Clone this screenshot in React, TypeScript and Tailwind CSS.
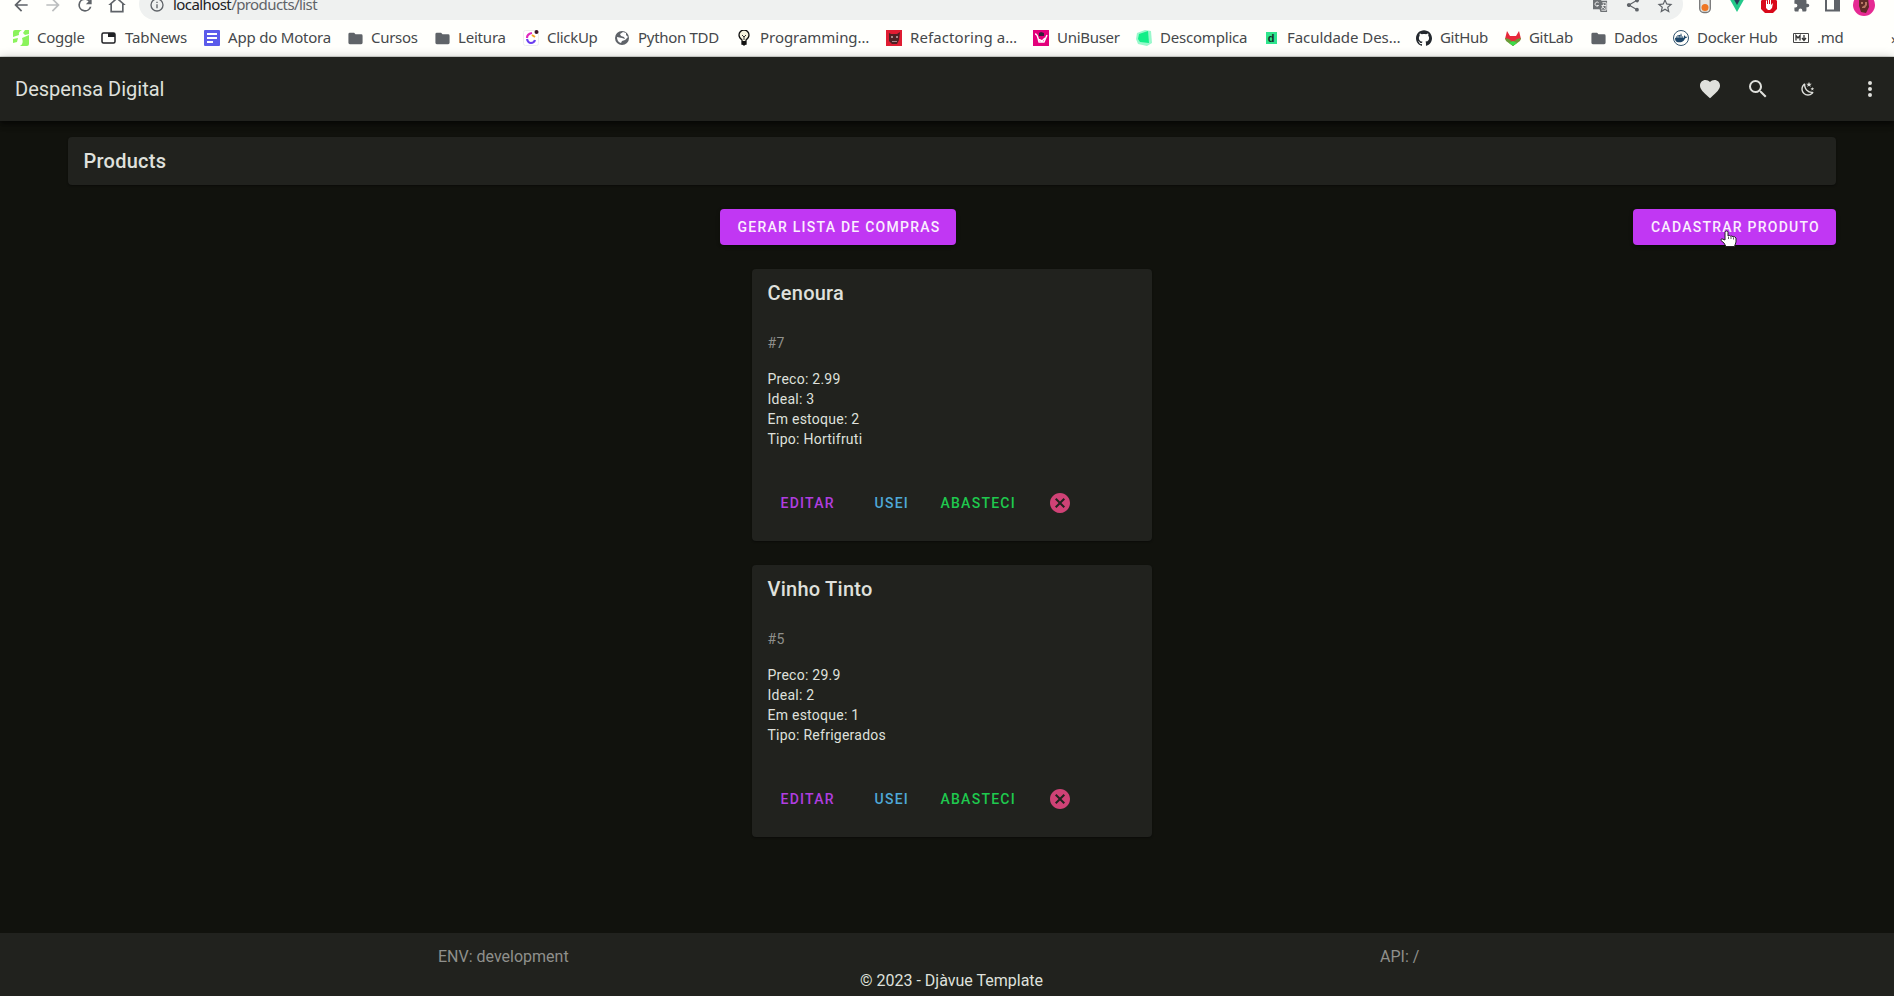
import React from "react";
import { SiGithub, SiDocker } from "react-icons/si";

type IconProps = { d: string; className?: string };
const Icon = ({ d, className = "size-6" }: IconProps) => (
  <svg viewBox="0 0 24 24" className={`shrink-0 ${className}`} fill="currentColor">
    <path d={d} />
  </svg>
);

const paths = {
  back: "M20 11H7.83l5.59-5.59L12 4l-8 8 8 8 1.41-1.41L7.83 13H20v-2z",
  forward: "M12 4l-1.41 1.41L16.17 11H4v2h12.17l-5.58 5.59L12 20l8-8z",
  reload:
    "M17.65 6.35A7.96 7.96 0 0 0 12 4a8 8 0 1 0 7.73 10h-2.08A6 6 0 1 1 12 6c1.66 0 3.14.69 4.22 1.78L13 11h7V4l-2.35 2.35z",
  home: "M12 5.2l6 5.4V19H6v-8.4l6-5.4M12 2.5L1.5 12H4v9h16v-9h2.5L12 2.5z",
  info: "M11 7h2v2h-2zm0 4h2v6h-2zm1-9a10 10 0 1 0 0 20 10 10 0 0 0 0-20zm0 18a8 8 0 1 1 0-16 8 8 0 0 1 0 16z",
  share:
    "M18 16.1c-.8 0-1.5.3-2 .8l-7.1-4.2a3 3 0 0 0 0-1.4L16 7.200a3 3 0 1 0-1-2.200c0 .2 0 .5.100.7L8 9.800a3 3 0 1 0 0 4.400l7.100 4.200c-.1.2-.1.4-.1.600a2.900 2.900 0 1 0 3-2.900z",
  star: "M22 9.24l-7.19-.62L12 2 9.19 8.630 2 9.240l5.460 4.730L5.820 21 12 17.270 18.180 21l-1.630-7.030L22 9.240zM12 15.400l-3.760 2.270 1-4.280-3.320-2.880 4.380-.38L12 6.100l1.710 4.040 4.380.38-3.320 2.880 1 4.280L12 15.400z",
  puzzle:
    "M20.500 11H19V7a2 2 0 0 0-2-2h-4V3.500a2.500 2.500 0 0 0-5 0V5H4a2 2 0 0 0-2 2v3.800h1.500a2.700 2.700 0 0 1 0 5.400H2V20c0 1.100.9 2 2 2h3.800v-1.500a2.700 2.700 0 0 1 5.400 0V22H17a2 2 0 0 0 2-2v-4h1.500a2.500 2.500 0 0 0 0-5z",
  folder: "M10 4H4a2 2 0 0 0-2 2v12c0 1.100.9 2 2 2h16a2 2 0 0 0 2-2V8a2 2 0 0 0-2-2h-8l-2-2z",
  heart:
    "M12 21.350l-1.450-1.320C5.400 15.360 2 12.270 2 8.500 2 5.410 4.420 3 7.500 3c1.740 0 3.410.81 4.500 2.080C13.090 3.810 14.760 3 16.500 3 19.580 3 22 5.410 22 8.500c0 3.770-3.400 6.860-8.550 11.530L12 21.350z",
  search:
    "M9.500 3A6.500 6.500 0 0 1 16 9.500c0 1.610-.59 3.090-1.560 4.230l.27.270h.79l5 5-1.500 1.500-5-5v-.79l-.27-.27A6.516 6.516 0 0 1 9.500 16 6.500 6.500 0 0 1 3 9.500 6.500 6.500 0 0 1 9.500 3m0 2C7 5 5 7 5 9.500S7 14 9.500 14 14 12 14 9.500 12 5 9.500 5z",
  night:
    "M17.750 4.090l-2.530 1.940.91 3.060-2.630-1.810-2.630 1.810.91-3.060-2.530-1.940L12.440 4l1.060-3 1.060 3 3.190.09m3.500 6.910l-1.640 1.250.59 1.980-1.700-1.170-1.700 1.170.59-1.980L15.750 11l2.060-.05L18.500 9l.69 1.950 2.060.05m-2.280 4.950c.83-.08 1.720 1.100 1.190 1.850-.32.450-.66.870-1.080 1.270C15.170 23 8.840 23 4.940 19.070c-3.910-3.900-3.910-10.240 0-14.140.4-.4.820-.76 1.270-1.080.75-.53 1.930.36 1.850 1.190-.27 2.860.69 5.830 2.890 8.020a9.960 9.960 0 0 0 8.020 2.890m-1.640 2.020a12.080 12.080 0 0 1-7.800-3.470c-2.170-2.190-3.330-5-3.490-7.820-2.810 3.140-2.700 7.960.31 10.980 3.020 3.010 7.840 3.120 10.980.31z",
  dots: "M12 16a2 2 0 1 1 0 4 2 2 0 0 1 0-4m0-6a2 2 0 1 1 0 4 2 2 0 0 1 0-4m0-6a2 2 0 1 1 0 4 2 2 0 0 1 0-4z",
  close:
    "M12 2C6.470 2 2 6.470 2 12s4.470 10 10 10 10-4.470 10-10S17.530 2 12 2m3.590 5L17 8.410 13.410 12 17 15.590 15.590 17 12 13.410 8.410 17 7 15.590 10.590 12 7 8.410 8.410 7 12 10.590 15.590 7z",
};

const Svg16 = ({ children }: { children: React.ReactNode }) => (
  <svg viewBox="0 0 16 16" className="size-4 shrink-0">
    {children}
  </svg>
);

const folder = <Icon d={paths.folder} className="size-[17px] -mr-px text-[#5f6368]" />;

const bookmarks: { label: string; icon: React.ReactNode; text: string }[] = [
  {
    label: "Coggle",
    text: "w-[47px] tracking-[-0.3px]",
    icon: (
      <Svg16>
        <path d="M0 2q0-2 2-2h7Q5 2 6 5L0 7zM12 0h4v4l-4 1-2-2zM9 8l7-3v9q0 2-2 2H7q4-2 2-8zM0 9l5-1-1 4-4 1z" fill="#8bf35c" />
      </Svg16>
    ),
  },
  {
    label: "TabNews",
    text: "w-[62px] tracking-[-0.2px]",
    icon: (
      <Svg16>
        <rect x="1" y="3" width="13" height="10" rx="1.500" fill="none" stroke="#202124" strokeWidth="1.500" />
        <path d="M7 3h7v4H7z" fill="#202124" />
      </Svg16>
    ),
  },
  {
    label: "App do Motora",
    text: "w-[102px] tracking-[-0.2px]",
    icon: (
      <Svg16>
        <rect width="16" height="16" rx="1" fill="#5b5bea" />
        <path d="M3 4h10M3 8h10M3 12h6" stroke="#fff" strokeWidth="2" />
      </Svg16>
    ),
  },
  { label: "Cursos", text: "w-[46px] tracking-[-0.3px]", icon: folder },
  { label: "Leitura", text: "w-[48px] tracking-[-0.2px]", icon: folder },
  {
    label: "ClickUp",
    text: "w-[50px] tracking-[-0.3px]",
    icon: (
      <Svg16>
        <rect x=".5" y=".5" width="15" height="15" rx="2" fill="#fff" stroke="#eee" />
        <path d="M4 9q1 4 4 4t4-3" fill="none" stroke="#6a3df0" strokeWidth="2.200" />
        <path d="M4 8q0-4 5-5" fill="none" stroke="#e02bbd" strokeWidth="2.200" />
        <path d="M9 5l3 2" stroke="#f5a623" strokeWidth="2" />
        <circle cx="13.500" cy="2" r="2" fill="#3c1528" />
      </Svg16>
    ),
  },
  {
    label: "Python TDD",
    text: "w-[81px] tracking-[-0.3px]",
    icon: (
      <Svg16>
        <circle cx="8" cy="8" r="7" fill="#5f6368" />
        <path d="M9 2L6 4l1 2 3 1 1 2-3-1-5-1q0 5 4 6l1-2 3-1 3-3-2-2V3z" fill="#fff" />
      </Svg16>
    ),
  },
  {
    label: "Programming…",
    text: "w-[109px] tracking-[-0.04px]",
    icon: (
      <Svg16>
        <path d="M6 10Q3 8 3 5a5 5 0 0 1 10 0q0 3-3 5v4H6z" fill="#f6f3df" stroke="#111" strokeWidth="1.300" />
        <path d="M6 5l2 2 2-2M8 7v3" stroke="#333" fill="none" />
        <path d="M6 11h4v3l-2 2-2-2z" fill="#111" />
      </Svg16>
    ),
  },
  {
    label: "Refactoring a…",
    text: "w-[106px] tracking-[0.1px]",
    icon: (
      <Svg16>
        <rect width="16" height="16" fill="#df1c32" />
        <path d="M3 3l2 1h6l3-2-1 8-2 4H6l-3-3z" fill="#4d2024" />
        <path d="M5 6h2v2H5zm5 0h2v2h-2zM6 11h5v1H6z" fill="#a7888b" />
      </Svg16>
    ),
  },
  {
    label: "UniBuser",
    text: "w-[62px] tracking-[-0.3px]",
    icon: (
      <Svg16>
        <rect width="16" height="16" fill="#e3007b" />
        <path d="M2 4q2 0 3 4l1 4h5l3-7M5 9l4 2 3-3" fill="none" stroke="#fff" strokeWidth="1.400" />
        <path d="M6 3l2-1 3 1v3H6z" fill="#34213b" />
      </Svg16>
    ),
  },
  {
    label: "Descomplica",
    text: "w-[86px] tracking-[-0.2px]",
    icon: (
      <Svg16>
        <path d="M1 3l8-3 6 1 1 12-5 3-9-2-2-5z" fill="#9af8cc" />
        <path d="M3 4l9-3 1 12-9-1-2-3z" fill="#13ee88" />
      </Svg16>
    ),
  },
  {
    label: "Faculdade Des…",
    text: "w-[112px] tracking-[-0.05px]",
    icon: (
      <span className="flex size-4 shrink-0 items-center justify-center">
        <span className="flex h-3 w-[11px] items-center justify-center bg-[#2fe58d] font-['Liberation_Sans'] text-[11px] leading-none font-bold tracking-normal text-[#12312a]">
          d
        </span>
      </span>
    ),
  },
  { label: "GitHub", text: "w-[48px] tracking-[-0.3px]", icon: <SiGithub className="size-4 shrink-0 text-[#24292e]" /> },
  {
    label: "GitLab",
    text: "w-[44px] tracking-[-0.3px]",
    icon: (
      <Svg16>
        <path d="M0 9l2-8 3 5h6l3-5 2 8-8 7z" fill="#e8283b" />
        <path d="M0 8l4 1 4 3 4-3 4-1-1 3-7 5-7-5z" fill="#6b9b37" />
        <path d="M4 13l4-2 4 2-4 3z" fill="#3ddc4a" />
      </Svg16>
    ),
  },
  { label: "Dados", text: "w-[42px] tracking-[-0.3px]", icon: folder },
  {
    label: "Docker Hub",
    text: "w-[79px] tracking-[-0.3px]",
    icon: (
      <span className="flex size-4 shrink-0 items-center justify-center rounded-full border border-[#32546f]">
        <SiDocker className="size-3 text-[#1d4668]" />
      </span>
    ),
  },
  {
    label: ".md",
    text: "w-[25px] tracking-[-0.3px]",
    icon: (
      <Svg16>
        <path d="M.5 3.500h15v9H.5z" fill="none" stroke="#444" />
        <path d="M3 10.500v-5l2 2.500 2-2.500v5M11 5v5M9 8l2 2.500L13 8" fill="none" stroke="#333" strokeWidth="1.300" />
      </Svg16>
    ),
  },
];

function BrowserChrome() {
  return (
    <div className="flex h-[57px] flex-col overflow-hidden border-b border-[#dcdeda] bg-[#fffffc] font-['Noto_Sans',sans-serif]">
      <div className="flex h-5 shrink-0 text-[#5f6368]">
        <div className="-mt-[5px] flex w-[139px] pl-[11px]">
          <Icon d={paths.back} className="mr-[12px] size-5" />
          <Icon d={paths.forward} className="mr-[12px] size-5 text-[#bcbebf]" />
          <Icon d={paths.reload} className="mr-[12px] size-5" />
          <Icon d={paths.home} className="size-5" />
        </div>
        <div className="-mt-3 flex h-8 w-[1544px] shrink-0 rounded-full bg-[#eff1f0] pt-[9px] pl-[10px]">
          <Icon d={paths.info} className="mr-[8px] size-4" />
          <div className="-mt-[3px] w-[1120px] text-[15px] leading-5 tracking-[-0.58px] text-[#5f6368]">
            <span className="text-[#202124]">localhost</span>/products/list
          </div>
          <svg viewBox="0 0 16 16" className="mt-px ml-[300px] size-[15px] shrink-0">
            <path d="M0 0h8l1 3h6v12H8l-1-3H0z" fill="#6d7174" />
            <path d="M10 5h4v8H9M9 8h5m-3-2v2l-2 4m1-3 3 3" stroke="#eee" fill="none" />
            <path d="M6 5a2.200 2.200 0 1 0 0 3H4" stroke="#eee" fill="none" />
          </svg>
          <Icon d={paths.share} className="ml-[17px] size-4" />
          <Icon d={paths.star} className="ml-[15px] size-[18px]" />
        </div>
        <div className="-mt-1 flex pl-[16px]">
          <svg viewBox="0 0 12 18" className="h-[18px] w-3">
            <rect x=".7" y="-4" width="10.600" height="20.500" rx="4" fill="#e4e4df" stroke="#777" strokeWidth="1.300" />
            <circle cx="6" cy="11.500" r="3.500" fill="#ef7622" />
          </svg>
          <svg viewBox="0 0 18 16" className="ml-[17px] h-4 w-[18px]">
            <path d="M0 0h18L9 16z" fill="#24c98a" />
            <path d="M4 0h10L9 9z" fill="#263e57" />
            <path d="M7 0h4L9 4z" fill="#fff" />
          </svg>
          <svg viewBox="0 0 18 18" className="ml-[14px] h-[18px] w-[18px]">
            <path d="M5 0h8l4 5v8l-4 4H5l-4-4V5z" fill="#d9091a" />
            <path d="M6 5l1-1v4h1V2h1v6h1V4h1v5l2-2-1 5-2 2H8l-2-2z" fill="#fff" />
          </svg>
          <Icon d={paths.puzzle} className="ml-[15px] size-[17px]" />
          <svg viewBox="0 0 16 16" className="ml-[15px] size-4">
            <path d="M1 0v14.500h13V0" fill="none" stroke="#5f6368" strokeWidth="2" />
            <path d="M9 0h5v15H9z" fill="#5f6368" />
          </svg>
          <svg viewBox="0 0 22 22" className="-mt-[2px] ml-[12px] size-[22px]">
            <circle cx="11" cy="11" r="11" fill="#e62a93" />
            <path d="M6 5l9-1 1 9-3 6-5-1-2-6z" fill="#5f2b27" />
            <path d="M8 8h2v2H8zm4 0h2v3l-2 3H9v-1l3-2z" fill="#b77762" />
          </svg>
        </div>
      </div>
      <div className="flex h-9 shrink-0 items-center pl-[13px] text-[15px] text-[#45484b]">
        {bookmarks.map((b) => (
          <div key={b.label} className="mr-[17px] flex shrink-0 items-center gap-2">
            {b.icon}
            <span className={`-mt-[2px] whitespace-nowrap ${b.text}`}>{b.label}</span>
          </div>
        ))}
        <span className="ml-8 shrink-0">»</span>
      </div>
    </div>
  );
}

function AppBar() {
  return (
    <header className="z-10 flex h-16 shrink-0 items-center bg-[#21221e] pr-3 pl-[15px] shadow-[0_2px_4px_-1px_rgba(0,0,0,0.4),0_4px_5px_rgba(0,0,0,0.28),0_1px_10px_rgba(0,0,0,0.24)]">
      <h1 className="grow text-[20px]">Despensa Digital</h1>
      <Icon d={paths.heart} className="mr-6 size-6" />
      <Icon d={paths.search} className="mr-[30px] size-6" />
      <Icon d={paths.night} className="mr-[42px] size-4" />
      <Icon d={paths.dots} className="size-6" />
    </header>
  );
}

const buttonText = "text-[14px] leading-9 font-medium tracking-[1.25px] uppercase";
const raised =
  "h-9 rounded bg-[#c137f3] pl-[2px] text-center text-[#fbeefe] shadow-[0_3px_1px_-2px_rgba(0,0,0,0.2),0_2px_2px_rgba(0,0,0,0.14),0_1px_5px_rgba(0,0,0,0.12)]";

type Product = { id: number; name: string; price: string; ideal: number; stock: number; kind: string };

const products: Product[] = [
  { id: 7, name: "Cenoura", price: "2.99", ideal: 3, stock: 2, kind: "Hortifruti" },
  { id: 5, name: "Vinho Tinto", price: "29.9", ideal: 2, stock: 1, kind: "Refrigerados" },
];

function ProductCard({ product }: { product: Product }) {
  return (
    <article className="h-[272px] w-[400px] rounded bg-[#21221e] pt-2 pr-4 pl-[15.5px] shadow-[0_1px_2px_rgba(0,0,0,0.4)]">
      <h2 className="text-[20px] leading-8 font-medium tracking-[0.25px]">{product.name}</h2>
      <p className="mt-6 text-[14px] leading-5 tracking-[0.25px] text-[#8f908c]">#{product.id}</p>
      <div className="mt-4 text-[14px] leading-5 tracking-[0.25px]">
        <p>Preco: {product.price}</p>
        <p>Ideal: {product.ideal}</p>
        <p>Em estoque: {product.stock}</p>
        <p>Tipo: {product.kind}</p>
      </div>
      <div className={`mt-9 flex items-center pl-[13px] ${buttonText}`}>
        <button className="w-[94px] text-left uppercase text-[#b13ee0]">Editar</button>
        <button className="w-[66px] text-left uppercase text-[#4fa9d8]">Usei</button>
        <button className="w-[107px] text-left uppercase text-[#1fc94e]">Abasteci</button>
        <Icon d={paths.close} className="size-6 text-[#cf4276]" />
      </div>
    </article>
  );
}

function Cursor() {
  return (
    <svg viewBox="0 0 17 18" className="absolute top-[21px] left-[87px] h-[18px] w-[17px]">
      <path
        d="M5 2.500q0-1.500 1.500-1.500T8 2.500V6l1.500-.5 1 .7 1.500-.2 1 .8 1.500-.1 1.500 1.300v4l-1.500 4.500H6L4 13 1 10.500q-.5-1.500 1-1.700L5 10z"
        fill="#fff"
        stroke="#222"
      />
      <path d="M8.500 7v2M11 7v2M13.500 7.500v2" stroke="#333" strokeWidth=".8" />
    </svg>
  );
}

export default function App() {
  return (
    <div className="flex h-[996px] w-[1894px] flex-col overflow-hidden bg-[#11120d] font-['Roboto',sans-serif] text-[#dfe0dc]">
      <BrowserChrome />
      <AppBar />
      <main className="grow pt-4 pr-[58px] pl-[68px]">
        <div className="h-12 rounded bg-[#21221e] py-2 pr-4 pl-[15.5px] text-[20px] leading-8 font-medium tracking-[0.25px] shadow-[0_1px_2px_rgba(0,0,0,0.4)]">
          Products
        </div>
        <div className="mt-6 flex justify-between pl-[652px]">
          <button className={`w-[236px] ${raised} ${buttonText}`}>Gerar lista de compras</button>
          <button className={`relative w-[203px] ${raised} ${buttonText}`}>
            Cadastrar produto
            <Cursor />
          </button>
        </div>
        <div className="mt-6 flex flex-col items-center gap-6">
          {products.map((p) => (
            <ProductCard key={p.id} product={p} />
          ))}
        </div>
      </main>
      <footer className="h-[63px] shrink-0 bg-[#21221e] pt-[12px] text-[16px] leading-6">
        <div className="flex text-[#8f908c]">
          <span className="w-[942px] pl-[438px]">ENV: development</span>
          <span className="pl-[438px]">API: /</span>
        </div>
        <p className="pl-[860px]">© 2023 - Djàvue Template</p>
      </footer>
    </div>
  );
}
